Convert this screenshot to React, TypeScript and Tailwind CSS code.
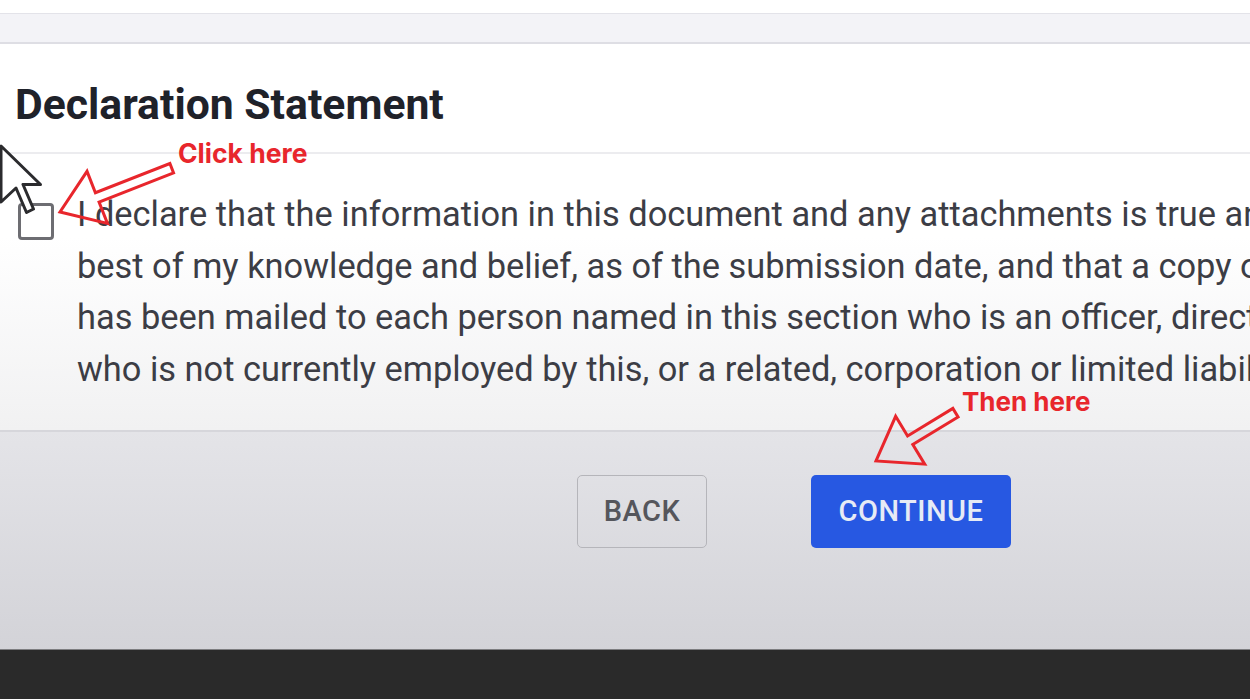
import React from "react";

const lines = [
  "I declare that the information in this document and any attachments is true and correct to the",
  "best of my knowledge and belief, as of the submission date, and that a copy of this document",
  "has been mailed to each person named in this section who is an officer, director, or manager",
  "who is not currently employed by this, or a related, corporation or limited liability company.",
];

// hollow red callout arrow, drawn pointing right with its tip at 0,0
function CalloutArrow({ x, y, angle, length }: { x: number; y: number; angle: number; length: number }) {
  const pts = `${-length},-5 -40,-5 -40,-28 0,0 -40,28 -40,5 ${-length},5`;
  return (
    <g transform={`translate(${x} ${y}) rotate(${angle})`}>
      <polygon points={pts} fill="none" stroke="#e8262c" strokeWidth={3} strokeLinejoin="miter" />
    </g>
  );
}

export default function App() {
  return (
    <div
      className="relative h-[700px] w-[1250px] overflow-hidden bg-white"
      style={{ fontFamily: "Roboto, 'Liberation Sans', sans-serif" }}
    >
      {/* top chrome strip */}
      <div className="h-[14px] border-b border-[#e3e3e9] bg-white" />
      <div className="h-[30px] border-b-2 border-[#dedee4] bg-[#f3f3f7]" />

      {/* declaration card */}
      <section className="bg-gradient-to-b from-white via-white to-[#f1f1f2]">
        <h2 className="pl-[15px] pt-[35px] pb-[23px] text-[42.7px] font-bold leading-[50px] text-[#1f222a]">
          Declaration Statement
        </h2>
        <div className="border-t-2 border-[#ececef]" />
        <div className="flex pt-[35px] pb-[35px]">
          <div className="ml-[18px] mt-[14px] h-[37px] w-[36px] shrink-0 rounded-[4px] border-[3px] border-[#6d6d72] bg-white" />
          <div className="ml-[23px] min-w-0 flex-1 overflow-hidden text-[34.4px] leading-[51.5px] text-[#3c3d45]">
            {lines.map((l) => (
              <div key={l} className="whitespace-nowrap">
                {l}
              </div>
            ))}
          </div>
        </div>
      </section>

      {/* actions */}
      <div className="h-[219px] border-t-2 border-[#d6d6db] bg-gradient-to-b from-[#e4e4e8] to-[#d3d3d8] pt-[43px]">
        <div className="flex gap-[104px] pl-[577px]">
          <button className="h-[73px] w-[130px] rounded-[5px] border border-[#b5b5ba] text-[29px] font-medium tracking-[0.5px] text-[#55565c]">
            BACK
          </button>
          <button className="h-[73px] w-[200px] rounded-[5px] bg-[#2758e2] text-[29px] font-medium tracking-[0.5px] text-[#e6ebf5]">
            CONTINUE
          </button>
        </div>
      </div>

      {/* dark footer */}
      <div className="h-[50px] border-t border-[#7d7d80] bg-[#2a2a2a]" />

      {/* annotations */}
      <svg className="pointer-events-none absolute left-0 top-0" width={1250} height={700}>
        <path
          d="M1 146 L1 202 L16 188 L26.5 212.5 L33.5 209 L23 184.5 L40.5 184.5 Z"
          fill="#ffffff"
          stroke="#2b2b2e"
          strokeWidth={3}
          strokeLinejoin="round"
        />
        <CalloutArrow x={60} y={212} angle={158.6} length={120} />
        <CalloutArrow x={876} y={461} angle={148.7} length={93} />
      </svg>
      <div
        className="absolute left-[178px] top-[138px] text-[26.5px] font-bold leading-[30px] text-[#e8262c]"
        style={{ fontFamily: "Inter, sans-serif" }}
      >
        Click here
      </div>
      <div
        className="absolute left-[962px] top-[387px] text-[26px] font-bold leading-[30px] text-[#e8262c]"
        style={{ fontFamily: "Inter, sans-serif" }}
      >
        Then here
      </div>
    </div>
  );
}
